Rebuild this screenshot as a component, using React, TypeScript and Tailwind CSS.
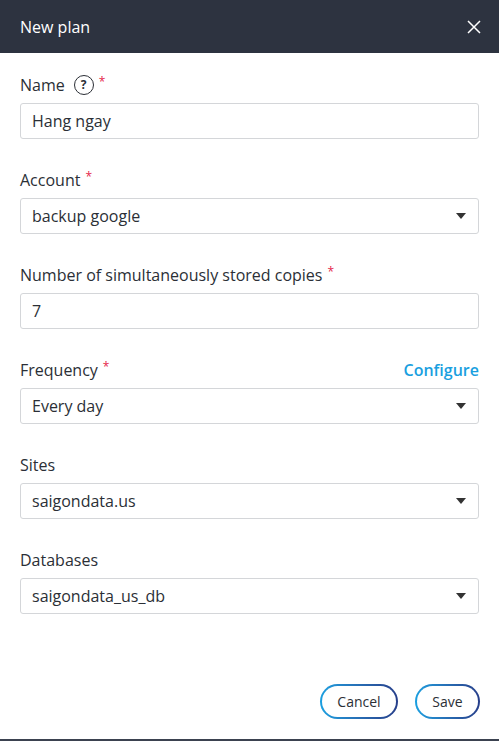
import React from "react";

const Star = () => <span className="text-[#e5254b] text-[12px] align-top ml-[5px] relative -top-[3px] font-normal">*</span>;

function Caret() {
  return <svg width="10" height="6" viewBox="0 0 10 6"><path d="M0 0h10L5 6z" fill="#333" /></svg>;
}

function Field({ label, value, req, select, extra }: { label: React.ReactNode; value: string; req?: boolean; select?: boolean; extra?: React.ReactNode }) {
  return (
    <div className="mb-[29px]">
      <div className="flex items-center justify-between h-[24px] mb-[6px]">
        <div className="flex items-center text-[16px] font-medium text-[#2b2f36]">{label}{req && <Star />}</div>
        {extra}
      </div>
      <div className="h-[36px] border border-[#d4d6d9] rounded-[3px] flex items-center justify-between pl-[11px] pr-[12px] text-[16px] text-[#2b2f36]">
        <span>{value}</span>
        {select && <Caret />}
      </div>
    </div>
  );
}

function GBtn({ children, w }: { children: string; w: string }) {
  return (
    <div className={`p-[2px] rounded-full bg-gradient-to-r from-[#1a9fe0] to-[#263e8a] ${w}`}>
      <div className="bg-white rounded-full h-[31px] flex items-center justify-center text-[14px] text-[#2b2f36]">{children}</div>
    </div>
  );
}

export default function App() {
  return (
    <div className="w-[499px] h-[741px] bg-white flex flex-col" style={{ fontFamily: '"Open Sans", sans-serif' }}>
      <div className="h-[53px] bg-[#2d3340] flex items-center justify-between pl-[20px] pr-[18px] text-white">
        <span className="text-[16px] font-medium">New plan</span>
        <svg width="14" height="14" viewBox="0 0 14 14"><path d="M1 1l12 12M13 1L1 13" stroke="#fff" strokeWidth="1.5" /></svg>
      </div>
      <div className="px-[20px] pt-[20px] flex-1">
        <Field label={<><span>Name</span><span className="ml-[9px] w-[20px] h-[20px] rounded-full border-[1.5px] border-[#2b2f36] flex items-center justify-center text-[12px] font-bold">?</span></>} value="Hang ngay" req />
        <Field label="Account" value="backup google" req select />
        <Field label="Number of simultaneously stored copies" value="7" req />
        <Field label="Frequency" value="Every day" req select extra={<span className="text-[#1a9fe0] text-[16px] font-semibold">Configure</span>} />
        <Field label="Sites" value="saigondata.us" select />
        <Field label="Databases" value="saigondata_us_db" select />
      </div>
      <div className="flex justify-end gap-[17px] pr-[19px] pb-[20px]">
        <GBtn w="w-[78px]">Cancel</GBtn>
        <GBtn w="w-[65px]">Save</GBtn>
      </div>
      <div className="h-[2px] bg-[#3b4250]" />
    </div>
  );
}
